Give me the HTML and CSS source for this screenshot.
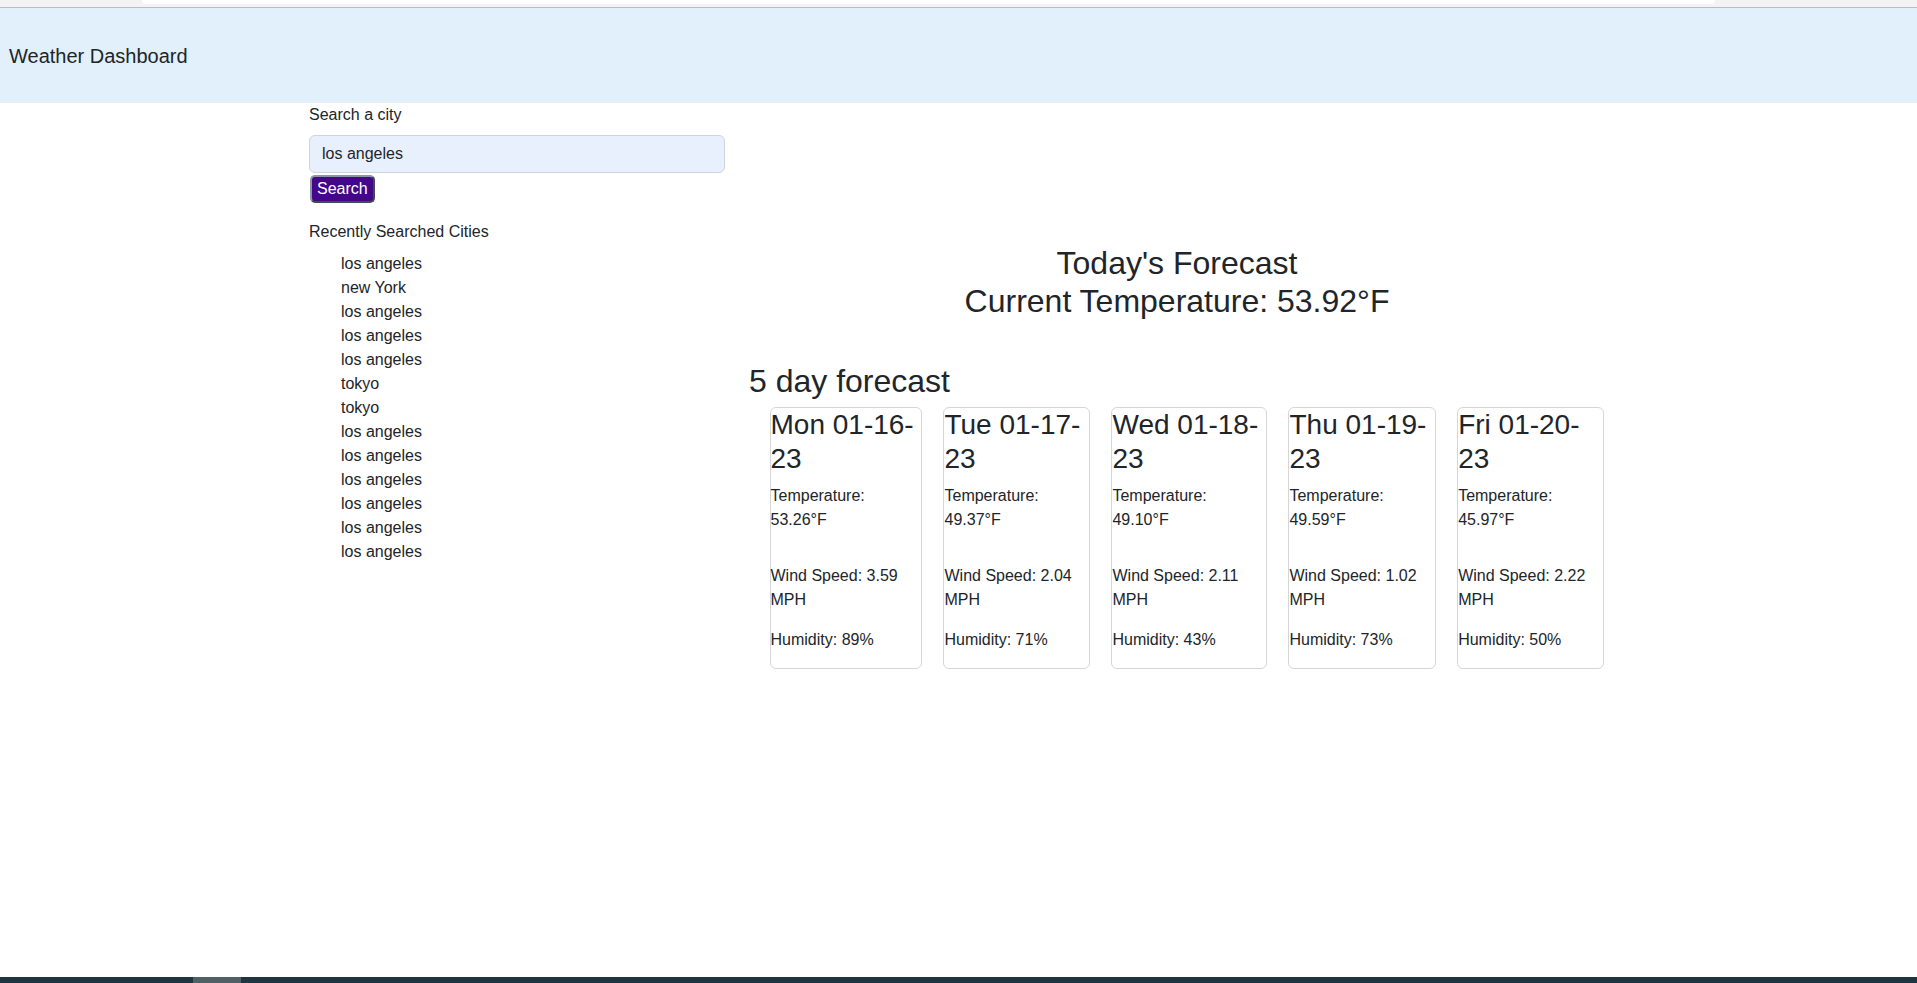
FILE: index.html
```html
<!DOCTYPE html>
<html lang="en">
<head>
<meta charset="utf-8">
<title>Weather Dashboard</title>
<link rel="stylesheet" href="styles.css">
</head>
<body>
<div class="chrome-top"><div class="chrome-tab"></div></div>
<header class="site-header">Weather Dashboard</header>
<main class="container">
  <section class="sidebar">
    <label class="form-label" for="city">Search a city</label>
    <input class="form-control" id="city" type="text" value="los angeles">
    <button class="search-btn" type="button">Search</button>
    <div class="recent-label">Recently Searched Cities</div>
    <ul class="recent-list">
      <li>los angeles</li>
      <li>new York</li>
      <li>los angeles</li>
      <li>los angeles</li>
      <li>los angeles</li>
      <li>tokyo</li>
      <li>tokyo</li>
      <li>los angeles</li>
      <li>los angeles</li>
      <li>los angeles</li>
      <li>los angeles</li>
      <li>los angeles</li>
      <li>los angeles</li>
    </ul>
  </section>
  <section class="forecast">
    <h2 class="today">Today's Forecast<br>Current Temperature: 53.92°F</h2>
    <h2 class="five-title">5 day forecast</h2>
    <div class="cards">
      <div class="card card-mon">
        <h3 class="card-title">Mon 01-16-23</h3>
        <p class="temp">Temperature: 53.26°F</p>
        <p class="wind">Wind Speed: 3.59 MPH</p>
        <p class="hum">Humidity: 89%</p>
      </div>
      <div class="card card-tue">
        <h3 class="card-title">Tue 01-17-23</h3>
        <p class="temp">Temperature: 49.37°F</p>
        <p class="wind">Wind Speed: 2.04 MPH</p>
        <p class="hum">Humidity: 71%</p>
      </div>
      <div class="card card-wed">
        <h3 class="card-title">Wed 01-18-23</h3>
        <p class="temp">Temperature: 49.10°F</p>
        <p class="wind">Wind Speed: 2.11 MPH</p>
        <p class="hum">Humidity: 43%</p>
      </div>
      <div class="card card-thu">
        <h3 class="card-title">Thu 01-19-23</h3>
        <p class="temp">Temperature: 49.59°F</p>
        <p class="wind">Wind Speed: 1.02 MPH</p>
        <p class="hum">Humidity: 73%</p>
      </div>
      <div class="card card-fri">
        <h3 class="card-title">Fri 01-20-23</h3>
        <p class="temp">Temperature: 45.97°F</p>
        <p class="wind">Wind Speed: 2.22 MPH</p>
        <p class="hum">Humidity: 50%</p>
      </div>
    </div>
  </section>
</main>
<div class="taskbar"><div class="taskbar-item"></div></div>
</body>
</html>
```
FILE: styles.css
```css
* { box-sizing: border-box; }

html, body {
  height: 100%;
}

body {
  margin: 0;
  font-family: "Liberation Sans", Arial, sans-serif;
  font-size: 16px;
  line-height: 1.5;
  color: #212529;
  background: #fff;
  display: flex;
  flex-direction: column;
  overflow: hidden;
}

.chrome-top {
  height: 8px;
  background: #f3f3f3;
  border-bottom: 1px solid #b9bdc1;
  flex: none;
}

.chrome-tab {
  margin-left: 142px;
  width: 1573px;
  height: 4px;
  background: #ffffff;
  border-radius: 0 0 8px 8px;
}

.site-header {
  flex: none;
  height: 95px;
  background: #e2f0fc;
  display: flex;
  align-items: center;
  padding-left: 9px;
  font-size: 20px;
  color: #212529;
}

.container {
  flex: 1;
  width: 100%;
  max-width: 1323px;
  margin: 0 auto;
  display: grid;
  grid-template-columns: 440px 880px;
  align-content: start;
}

.sidebar,
.forecast {
  padding: 0 12px;
}

.form-label {
  display: block;
  margin-bottom: 8px;
}

.form-control {
  display: block;
  width: 100%;
  height: 38px;
  padding: 6px 12px;
  font: inherit;
  color: #212529;
  background: #e8f0fe;
  border: 1px solid #ced4da;
  border-radius: 6px;
  outline: none;
}

.search-btn {
  display: block;
  margin: 2px 0 0 1px;
  height: 28px;
  padding: 0 5px;
  font: inherit;
  line-height: 22px;
  color: #fff;
  background: #44078a;
  border: 2px outset #8d96a6;
  border-radius: 5px;
}

.recent-label {
  margin-top: 17px;
  margin-bottom: 8px;
}

.recent-list {
  list-style: none;
  margin: 0;
  padding-left: 32px;
}

.today {
  margin: 141px 0 0;
  font-size: 32px;
  font-weight: 400;
  line-height: 1.2;
  text-align: center;
}

.five-title {
  margin: 41.2px 0 7.1px;
  font-size: 32px;
  font-weight: 400;
  line-height: 1.2;
}

.cards {
  display: flex;
  align-items: flex-start;
  gap: 21.4px;
  padding-left: 20.5px;
}

.card {
  border: 1px solid #d6d6d6;
  border-radius: 6px;
  background: #fff;
}

.card-mon { width: 152.6px; }
.card-tue { width: 146.6px; }
.card-wed { width: 155.6px; }
.card-thu { width: 147.3px; }
.card-fri { width: 146.6px; }

.card-title {
  margin: 0 0 8px;
  font-size: 28px;
  font-weight: 400;
  line-height: 1.2;
}

.card p {
  margin: 0 0 16px;
}

.card .temp {
  margin-bottom: 32px;
}

.taskbar {
  flex: none;
  height: 6px;
  background: #1f3540;
}

.taskbar-item {
  margin-left: 193px;
  width: 48px;
  height: 100%;
  background: #4f6167;
}
```
